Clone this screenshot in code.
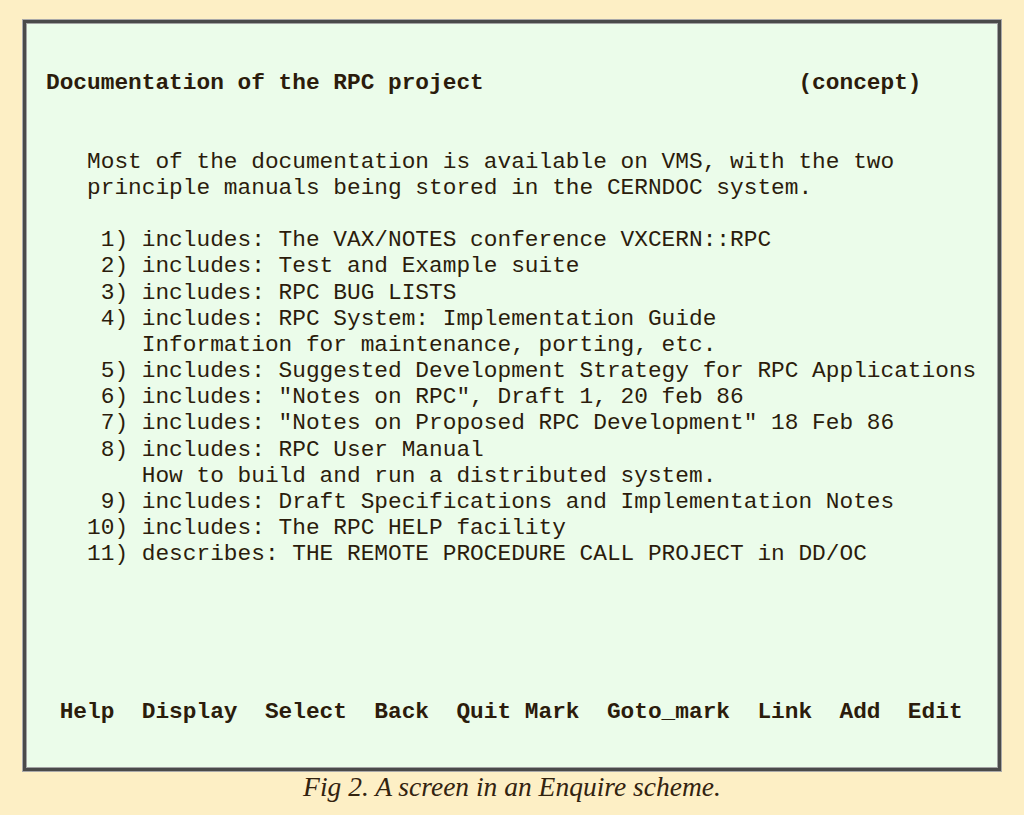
import React from "react";

const heading =
  "Documentation of the RPC project                       (concept)";

const body = [
  "",
  "",
  "   Most of the documentation is available on VMS, with the two",
  "   principle manuals being stored in the CERNDOC system.",
  "",
  "    1) includes: The VAX/NOTES conference VXCERN::RPC",
  "    2) includes: Test and Example suite",
  "    3) includes: RPC BUG LISTS",
  "    4) includes: RPC System: Implementation Guide",
  "       Information for maintenance, porting, etc.",
  "    5) includes: Suggested Development Strategy for RPC Applications",
  '    6) includes: "Notes on RPC", Draft 1, 20 feb 86',
  '    7) includes: "Notes on Proposed RPC Development" 18 Feb 86',
  "    8) includes: RPC User Manual",
  "       How to build and run a distributed system.",
  "    9) includes: Draft Specifications and Implementation Notes",
  "   10) includes: The RPC HELP facility",
  "   11) describes: THE REMOTE PROCEDURE CALL PROJECT in DD/OC",
  "",
  "",
  "",
  "",
  "",
];

const menu =
  " Help  Display  Select  Back  Quit Mark  Goto_mark  Link  Add  Edit";

export default function App() {
  return (
    <div className="w-[1024px] h-[815px] bg-[#fdefc5] pt-[20px] pl-[23px]">
      {/* screen frame */}
      <div className="w-[978px] h-[751px] bg-[#ebfcea] border-[3px] border-[#4a4a4a] shadow-[0_0_0_1px_#a9a9a9,inset_0_0_0_1px_#a3a3a3] pl-[20px] pt-[47px]">
        <pre className="font-['Liberation_Mono',monospace] text-[22.8px] leading-[26.2px] text-[#2b1c0c] whitespace-pre">
          <div className="font-bold">{heading}</div>
          {body.map((l, i) => (
            <div key={i} className="h-[26.2px]">
              {l}
            </div>
          ))}
          <div className="font-bold">{menu}</div>
        </pre>
      </div>

      {/* caption */}
      <div className="w-[978px] text-center font-['Liberation_Serif',serif] italic text-[27.5px] leading-[30px] text-[#33230f] mt-[1px]">
        Fig 2. A screen in an Enquire scheme.
      </div>
    </div>
  );
}
